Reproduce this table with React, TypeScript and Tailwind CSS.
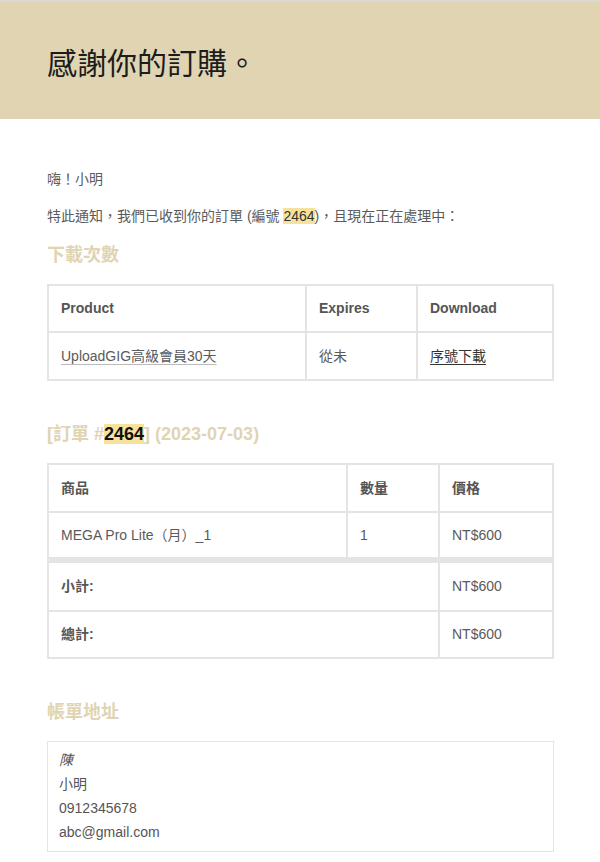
import React from 'react';

const cell = 'border-2 border-[#e4e4e4] px-[12px] align-middle';

const App: React.FC = () => {
  return (
    <div className="w-[600px] min-h-[862px] bg-white font-['Liberation_Sans','Noto_Sans_CJK_TC',sans-serif] text-[#5a5a5a]">
      <div className="h-[2px] bg-[#d8d8d8]" />
      <div className="h-[117px] bg-[#e0d4b3] flex items-center px-[47px]">
        <h1 className="text-[30px] leading-none text-[#1c1c1c] font-['Noto_Sans_CJK_TC',sans-serif] font-normal">感謝你的訂購。</h1>
      </div>

      <div className="px-[47px] pt-[48px] text-[14px]">
        <p className="leading-[24px]">嗨！小明</p>
        <p className="leading-[24px] mt-[13px]">
          特此通知，我們已收到你的訂單 (編號 <mark className="bg-[#f7e29c] text-[#333]">2464</mark>)，且現在正在處理中：
        </p>

        <h2 className="mt-[15px] text-[18px] leading-[24px] font-bold text-[#e0d4b3]">下載次數</h2>
        <table className="mt-[17px] w-[507px] border-collapse text-[14px]">
          <thead>
            <tr className="h-[47px]">
              <th className={`${cell} w-[258px] text-left font-bold text-[#555]`}>Product</th>
              <th className={`${cell} w-[111px] text-left font-bold text-[#555]`}>Expires</th>
              <th className={`${cell} text-left font-bold text-[#555]`}>Download</th>
            </tr>
          </thead>
          <tbody>
            <tr className="h-[48px]">
              <td className={cell}><span className="underline decoration-[#bbb] underline-offset-[3px]">UploadGIG高級會員30天</span></td>
              <td className={cell}>從未</td>
              <td className={cell}><span className="underline underline-offset-[3px] text-[#333]">序號下載</span></td>
            </tr>
          </tbody>
        </table>

        <h2 className="mt-[41px] text-[18px] leading-[24px] font-bold text-[#e0d4b3]">
          [訂單 #<mark className="bg-[#f7e29c] text-[#111]">2464</mark>] (2023-07-03)
        </h2>
        <table className="mt-[17px] w-[507px] border-collapse text-[14px]">
          <thead>
            <tr className="h-[48px]">
              <th className={`${cell} w-[299px] text-left font-bold text-[#555]`}>商品</th>
              <th className={`${cell} w-[92px] text-left font-bold text-[#555]`}>數量</th>
              <th className={`${cell} text-left font-bold text-[#555]`}>價格</th>
            </tr>
          </thead>
          <tbody>
            <tr className="h-[48px]">
              <td className={cell}>MEGA Pro Lite（月）_1</td>
              <td className={cell}>1</td>
              <td className={cell}>NT$600</td>
            </tr>
          </tbody>
          <tfoot>
            <tr className="h-[51px]">
              <th colSpan={2} className={`${cell} border-t-[6px] text-left font-bold text-[#555]`}>小計:</th>
              <td className={`${cell} border-t-[6px]`}>NT$600</td>
            </tr>
            <tr className="h-[47px]">
              <th colSpan={2} className={`${cell} text-left font-bold text-[#555]`}>總計:</th>
              <td className={cell}>NT$600</td>
            </tr>
          </tfoot>
        </table>

        <h2 className="mt-[41px] text-[18px] leading-[24px] font-bold text-[#e0d4b3]">帳單地址</h2>
        <address className="mt-[17px] w-[507px] border border-[#e4e4e4] px-[11px] pt-[6px] pb-[7px] text-[14px] leading-[24px] text-[#555]">
          陳<br />
          <span className="not-italic">小明</span><br />
          <span className="not-italic">0912345678</span><br />
          <span className="not-italic">abc@gmail.com</span>
        </address>
      </div>
    </div>
  );
};

export default App;
